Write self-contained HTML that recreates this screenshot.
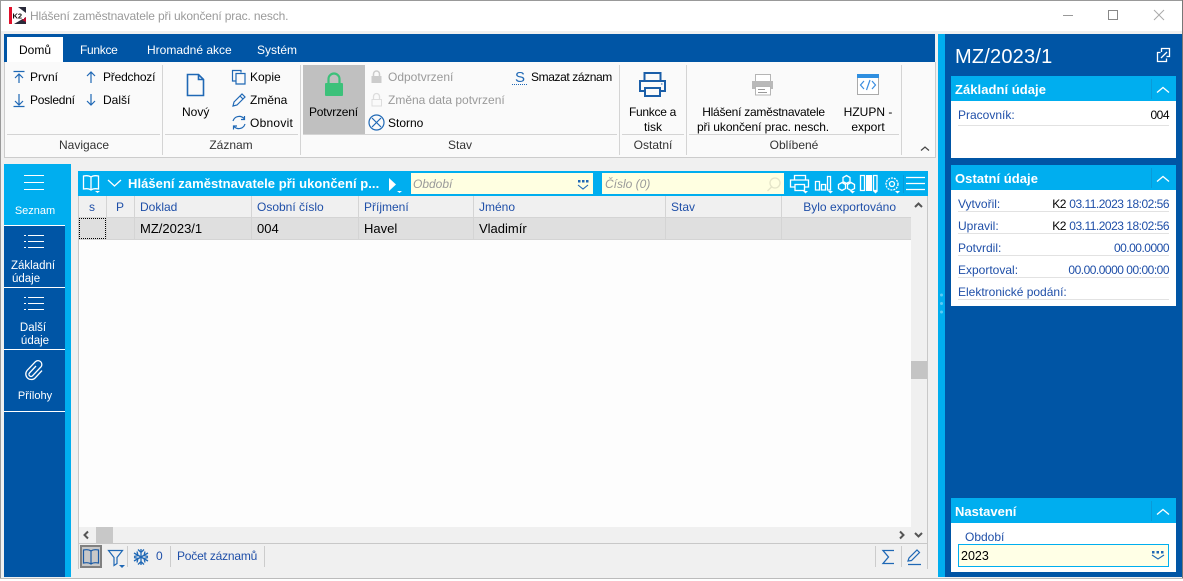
<!DOCTYPE html>
<html lang="cs"><head><meta charset="utf-8"><title>Hlášení zaměstnavatele při ukončení prac. nesch.</title>
<style>
html,body{margin:0;padding:0;width:1183px;height:581px;overflow:hidden;background:#f0f0f0}
body{position:relative;font-family:"Liberation Sans",sans-serif;font-size:12px;color:#000}
.b{position:absolute}
.t{position:absolute;white-space:nowrap;line-height:14px;height:14px}
.c{transform:translateX(-50%)}
.r{transform:translateX(-100%)}
.w{color:#fff}.g{color:#9a9a9a}.l{color:#1f4fa8}
.h{font-weight:bold;color:#fff;font-size:13px}
.d{letter-spacing:-.5px}
.m{font-size:13px}
svg{position:absolute;left:0;top:0}
</style></head><body>
<!-- frame -->
<div class="b" style="left:0;top:0;width:1183px;height:1px;background:#999"></div>
<div class="b" style="left:0;top:1px;width:1183px;height:30px;background:#fff"></div>
<div class="b" style="left:0;top:0;width:1px;height:581px;background:#999"></div>
<div class="b" style="left:1182px;top:0;width:1px;height:581px;background:#777"></div>
<div class="b" style="left:0;top:579px;width:1183px;height:2px;background:#fff"></div>
<div class="b" style="left:0;top:578px;width:1183px;height:1px;background:#bbb"></div>
<!-- ribbon -->
<div class="b" style="left:4px;top:34px;width:931px;height:28px;background:#0055a5"></div>
<div class="b" style="left:7px;top:37px;width:56px;height:25px;background:#fff"></div>
<div class="b" style="left:4px;top:62px;width:930px;height:95px;background:#fafafa;border:1px solid #ccc;border-top:0;box-sizing:content-box"></div>
<div class="b" style="left:303px;top:65px;width:62px;height:69px;background:#c0c0c0"></div>
<!-- ribbon separators -->
<div class="b" style="left:162px;top:65px;width:1px;height:90px;background:#d4d4d4"></div>
<div class="b" style="left:300px;top:65px;width:1px;height:90px;background:#d4d4d4"></div>
<div class="b" style="left:619px;top:65px;width:1px;height:90px;background:#d4d4d4"></div>
<div class="b" style="left:686px;top:65px;width:1px;height:90px;background:#d4d4d4"></div>
<div class="b" style="left:901px;top:65px;width:1px;height:90px;background:#d4d4d4"></div>
<div class="b" style="left:7px;top:134px;width:153px;height:1px;background:#d4d4d4"></div>
<div class="b" style="left:165px;top:134px;width:133px;height:1px;background:#d4d4d4"></div>
<div class="b" style="left:303px;top:134px;width:314px;height:1px;background:#d4d4d4"></div>
<div class="b" style="left:622px;top:134px;width:62px;height:1px;background:#d4d4d4"></div>
<div class="b" style="left:689px;top:134px;width:210px;height:1px;background:#d4d4d4"></div>
<!-- left nav -->
<div class="b" style="left:4px;top:164px;width:67px;height:413px;background:#00aeef"></div>
<div class="b" style="left:4px;top:226px;width:61px;height:351px;background:#0055a5"></div>
<div class="b" style="left:4px;top:225px;width:61px;height:1px;background:#fff"></div>
<div class="b" style="left:4px;top:287px;width:61px;height:1px;background:#fff"></div>
<div class="b" style="left:4px;top:349px;width:61px;height:1px;background:#fff"></div>
<div class="b" style="left:4px;top:411px;width:61px;height:1px;background:#fff"></div>
<!-- grid -->
<div class="b" style="left:78px;top:171px;width:850px;height:398px;background:#fdfdfd;border-left:1px solid #c8c8c8;border-right:1px solid #c8c8c8;border-bottom:1px solid #c8c8c8;box-sizing:border-box"></div>
<div class="b" style="left:78px;top:171px;width:850px;height:25px;background:#00aeef"></div>
<div class="b" style="left:411px;top:173px;width:182px;height:21px;background:#ffffe1"></div>
<div class="b" style="left:602px;top:173px;width:182px;height:21px;background:#ffffe1"></div>
<div class="b" style="left:79px;top:196px;width:832px;height:21px;background:#f0f0f0"></div>
<div class="b" style="left:79px;top:217px;width:832px;height:23px;background:#dfdfdf;border-top:1px solid #d4d4d4;border-bottom:1px solid #d4d4d4;box-sizing:border-box"></div>
<div class="b" style="left:79px;top:218px;width:27px;height:21px;border:1px dotted #000;box-sizing:border-box"></div>
<div class="b" style="left:106px;top:196px;width:1px;height:44px;background:#d4d4d4"></div>
<div class="b" style="left:134px;top:196px;width:1px;height:44px;background:#d4d4d4"></div>
<div class="b" style="left:251px;top:196px;width:1px;height:44px;background:#d4d4d4"></div>
<div class="b" style="left:358px;top:196px;width:1px;height:44px;background:#d4d4d4"></div>
<div class="b" style="left:473px;top:196px;width:1px;height:44px;background:#d4d4d4"></div>
<div class="b" style="left:665px;top:196px;width:1px;height:44px;background:#d4d4d4"></div>
<div class="b" style="left:781px;top:196px;width:1px;height:44px;background:#d4d4d4"></div>
<!-- scrollbars -->
<div class="b" style="left:911px;top:196px;width:16px;height:347px;background:#f0f0f0"></div>
<div class="b" style="left:911px;top:361px;width:16px;height:18px;background:#c4c4c4"></div>
<div class="b" style="left:79px;top:527px;width:848px;height:16px;background:#f0f0f0"></div>
<div class="b" style="left:96px;top:527px;width:17px;height:16px;background:#c8c8c8"></div>
<div class="b" style="left:79px;top:543px;width:848px;height:26px;background:#f0f0f0;border-top:1px solid #c8c8c8;box-sizing:border-box"></div>
<div class="b" style="left:80px;top:545px;width:22px;height:23px;background:#c8c8c8;border:2px solid #808080;box-sizing:border-box"></div>
<div class="b" style="left:127px;top:546px;width:1px;height:21px;background:#ccc"></div>
<div class="b" style="left:170px;top:546px;width:1px;height:21px;background:#ccc"></div>
<div class="b" style="left:264px;top:546px;width:1px;height:21px;background:#ccc"></div>
<div class="b" style="left:875px;top:546px;width:1px;height:21px;background:#ccc"></div>
<div class="b" style="left:901px;top:546px;width:1px;height:21px;background:#ccc"></div>
<!-- right pane -->
<div class="b" style="left:938px;top:34px;width:7px;height:543px;background:#00aeef"></div>
<div class="b" style="left:945px;top:34px;width:237px;height:543px;background:#0055a5"></div>
<div class="b" style="left:951px;top:76px;width:225px;height:82px;background:#fff"></div>
<div class="b" style="left:951px;top:76px;width:225px;height:25px;background:#00aeef"></div>
<div class="b" style="left:951px;top:165px;width:225px;height:141px;background:#fff"></div>
<div class="b" style="left:951px;top:165px;width:225px;height:25px;background:#00aeef"></div>
<div class="b" style="left:951px;top:498px;width:225px;height:74px;background:#fff"></div>
<div class="b" style="left:951px;top:498px;width:225px;height:25px;background:#00aeef"></div>
<div class="b" style="left:1151px;top:79px;width:1px;height:20px;background:#0a9ad8"></div>
<div class="b" style="left:1151px;top:168px;width:1px;height:20px;background:#0a9ad8"></div>
<div class="b" style="left:1151px;top:501px;width:1px;height:20px;background:#0a9ad8"></div>
<div class="b" style="left:958px;top:125px;width:211px;height:1px;background:#e2e2e2"></div>
<div class="b" style="left:958px;top:211px;width:211px;height:1px;background:#e2e2e2"></div>
<div class="b" style="left:958px;top:233px;width:211px;height:1px;background:#e2e2e2"></div>
<div class="b" style="left:958px;top:255px;width:211px;height:1px;background:#e2e2e2"></div>
<div class="b" style="left:958px;top:277px;width:211px;height:1px;background:#e2e2e2"></div>
<div class="b" style="left:958px;top:299px;width:211px;height:1px;background:#e2e2e2"></div>
<div class="b" style="left:958px;top:544px;width:211px;height:23px;background:#ffffe6;border:1px solid #00aeef;box-sizing:border-box"></div>

<!-- icons -->
<svg width="1183" height="581" viewBox="0 0 1183 581" fill="none">
<!-- logo -->
<rect x="9" y="7" width="17" height="17" fill="#fff"/><rect x="9" y="7" width="3" height="17" fill="#e0102a"/>
<path d="M18 7h8v6zM14 24l12-7v7z" fill="#2a2a3a"/><path d="M22 20l4-3v5z" fill="#c01030"/>
<rect x="12" y="12" width="12" height="7" fill="#fff"/>
<text x="12.5" y="18.5" font-family="Liberation Sans" font-size="7.5" font-weight="bold" fill="#111">K2</text>
<!-- window buttons -->
<path d="M1063 15.5h10" stroke="#999"/><rect x="1108.5" y="10.5" width="9" height="9" stroke="#888"/>
<path d="M1154 10l10 10M1164 10l-10 10" stroke="#aaa"/>
<g stroke="#1f68b5" stroke-width="1.2">
<!-- navigation arrows -->
<path d="M13.5 71.5h11M19 74v9M15 78l4-4 4 4"/>
<path d="M91 83V72M87 76l4-4 4 4"/>
<path d="M19 94v11M15 101l4 4 4-4M13.5 106.500h11"/>
<path d="M91 94v11M87 101l4 4 4-4"/>
<!-- new doc -->
<path d="M187.500 74.500h11l5 5v16h-16zM198.500 74.500v5h5" stroke-width="1.600"/>
<!-- copy -->
<path d="M241 72.500v-2h-8.500v10.500h3.500M236 73.500h9v10.500h-9z"/>
<!-- pencil -->
<path d="M233 106l1-4 8-8 3 3-8 8zM240 96l3 3"/>
<!-- refresh -->
<path d="M233 121a6.500 6.500 0 0 1 11-2.500M244.500 116v3.500h-3.500M245 124a6.500 6.500 0 0 1-11 2.500M233.500 129.500v-3.500h3.500"/>
<!-- storno -->
<circle cx="376.500" cy="122.500" r="7.500"/><path d="M372 118l9 9M381 118l-9 9"/>
<!-- sigma / pencil status -->
<path d="M894 550.500h-11l5.500 6.500-5.500 6.500h11" stroke-width="1.300"/>
<path d="M908 561l1-3 8-8 2.500 2.500-8 8zM908 564.500h13"/>
<!-- snowflake -->
<path d="M141 549v16M134 553l14 8M148 553l-14 8M138 549.500l3 3 3-3M138 564.500l3-3 3 3M134 556.500l4-1-1-4M148 556.500l-4-1 1-4M134 557.500l4 1-1 4M148 557.500l-4 1 1 4" stroke-width="1.300"/>
<!-- funnel -->
<path d="M108.500 550.500h14l-5.500 7v6l-3 2v-8z"/>
<!-- book status -->
<path d="M91 551c-2-1.500-5-1.500-7.500-1v13c2.500-.5 5.500-.5 7.500 1 2-1.500 5-1.500 7.500-1v-13c-2.500-.5-5.500-.5-7.500 1zM91 551v13" stroke="#1a5aa5"/>
</g>
<path d="M119 565h6l-3 3z" fill="#1f68b5"/>
<!-- locks -->
<rect x="325" y="83" width="18" height="13" rx="1" fill="#3cc17a"/><path d="M328.500 83v-4a5.500 5.500 0 0 1 11 0v4" stroke="#3cc17a" stroke-width="2.200"/>
<rect x="371.500" y="76" width="10" height="7" fill="#ccc"/><path d="M373.500 76v-2a3 3 0 0 1 6 0v2" stroke="#ccc" stroke-width="1.500"/>
<rect x="372" y="99.500" width="9.500" height="6.500" stroke="#ddd" fill="#fafafa"/><path d="M373.500 99v-2.500a3 3 0 0 1 6 0v2.500" stroke="#ddd" stroke-width="1.300"/>
<!-- S icon -->
<text x="515" y="82" font-family="Liberation Sans" font-size="15" fill="#1f68b5">S</text>
<path d="M512 84.500h15" stroke="#1f68b5" stroke-dasharray="1 1"/>
<!-- printer blue -->
<g stroke="#1a5ea8" stroke-width="2">
<path d="M644.500 81v-8h16v8"/><path d="M645 91h-5v-10h25v10h-5"/>
<rect x="645" y="88" width="15" height="8" fill="#fafafa"/></g>
<path d="M661 84h1.500" stroke="#1a5ea8"/>
<!-- printer grey -->
<rect x="755.500" y="74.500" width="15" height="8" stroke="#b5b5b5" fill="#fff"/>
<rect x="752" y="81" width="21" height="8" fill="#b9b9b9"/>
<rect x="755.500" y="86.500" width="15" height="8.500" fill="#fff" stroke="#b5b5b5"/><path d="M758 89.500h7M758 92.500h9" stroke="#999"/>
<!-- html icon -->
<rect x="857.500" y="74.500" width="21" height="20" fill="#fff" stroke="#aaa"/><rect x="857" y="74" width="22" height="4" fill="#2f8fe0"/>
<path d="M864 81l-3.500 4 3.500 4M872 81l3.500 4-3.500 4M870 80l-3.500 10" stroke="#3a8de0" stroke-width="1.200"/>
<path d="M921 150.500l4-3.500 4 3.500" stroke="#444" stroke-width="1.200"/>
<!-- nav icons -->
<g stroke="#fff" stroke-width="1.100">
<path d="M24 175.500h20M24 182.500h20M24 189.500h20"/>
<path d="M28 235.500h16M28 241.500h16M28 247.500h16M24 235.500h2M24 241.500h2M24 247.500h2"/>
<path d="M28 297.500h16M28 303.500h16M28 309.500h16M24 297.500h2M24 303.500h2M24 309.500h2"/>
<path d="M36 366l-6.500 7a2 2 0 0 0 3 2.800l8.500-9a3.800 3.800 0 0 0-5.500-5.200l-8.500 9a5.500 5.500 0 0 0 8 7.500l7-7.500" stroke-width="1.300"/>
</g>
<!-- grid toolbar -->
<g stroke="#fff" stroke-width="1.300">
<path d="M91 177c-2-1.500-5-1.500-7.500-1v13c2.500-.5 5.500-.5 7.500 1 2-1.500 5-1.500 7.500-1v-13c-2.500-.5-5.500-.5-7.500 1zM91 177v13"/>
<path d="M108 180l6.500 6 6.500-6"/>
<path d="M794.500 180v-4.500h11v4.500M795 187h-4.500v-7h18v7h-4"/><rect x="795" y="184.500" width="9.500" height="6"/>
<path d="M815.500 181.500h4v8.500h-4zM821.500 184.500h4v5.500h-4zM827.500 176.500h3v13.500h-3z"/>
<path d="M846.500 175.500l3.500 2v4l-3.500 2-3.500-2v-4zM842 182.500l3.500 2v4l-3.500 2-3.500-2v-4zM851 182.500l3.500 2v4l-3.500 2-3.500-2v-4z"/>
<path d="M860.500 175.500h4v15h-4zM873.500 175.500h3.500v15h-3.500z"/><rect x="866" y="175" width="6" height="16" fill="#fff" stroke="none"/>
<circle cx="892" cy="184" r="6" stroke-dasharray="2 1"/><circle cx="892" cy="184" r="2.500"/>
<path d="M906 177.500h19M906 183.500h19M906 189.500h19"/>
<path d="M1160.500 52.500h-3v9h9v-3M1161.500 52v-3.500h8v8h-3M1161 58l6-6"/>
</g>
<path d="M903.500 175v18" stroke="#0a9ad8"/>
<g stroke="#fff" stroke-width="1.300"><path d="M1157 92.500l6-5 6 5M1157 181.500l6-5 6 5M1157 514.500l6-5 6 5"/></g>
<path d="M389 178l7 6.500-7 6.500zM397 191h5l-2.500 2zM95 191h5l-2.500 2z" fill="#fff"/>
<path d="M828 191h5l-2.500 2.500zM803 191h5l-2.500 2.500zM850 191h5l-2.500 2.500zM873 191h5l-2.500 2.500zM895 191h5l-2.500 2.500z" fill="#fff"/>
<!-- search / combo -->
<path d="M578 185l5 4 5-4" stroke="#1f68b5" stroke-width="1.100"/>
<path d="M578 180h2.500v2.500h-2.500zM582 180h2.500v2.500h-2.500zM586 180h2.500v2.500h-2.500z" fill="#1f68b5"/>
<path d="M1152 555l6 4 6-4" stroke="#1f68b5" stroke-width="1.100"/>
<path d="M1152 551h2.500v2.500h-2.500zM1156.500 551h2.500v2.500h-2.500zM1161 551h2.500v2.500h-2.500z" fill="#1f68b5"/>
<circle cx="775" cy="183" r="5" stroke="#e4e4c8" stroke-width="1.300"/><path d="M771.500 187l-4 4" stroke="#e4e4c8" stroke-width="1.300"/>
<!-- scroll arrows -->
<path d="M915 207l3.500-3.500 3.500 3.500M88 531.500l-3.500 3.500 3.500 3.500M900 531.500l3.500 3.500-3.500 3.500M915 533l3.500 3.500 3.500-3.500" stroke="#555" stroke-width="2"/>
<!-- splitter dots -->
<circle cx="941.500" cy="295" r="1.500" fill="#5ccaf5"/><circle cx="941.500" cy="303.500" r="1.500" fill="#5ccaf5"/><circle cx="941.500" cy="312" r="1.500" fill="#5ccaf5"/>
</svg>

<!-- text -->
<div class="t g" style="left:30px;top:9px;letter-spacing:-.15px">Hlášení zaměstnavatele při ukončení prac. nesch.</div>
<div class="t" style="left:19px;top:43px">Domů</div>
<div class="t w" style="left:80px;top:43px;letter-spacing:-.3px">Funkce</div>
<div class="t w" style="left:147px;top:43px">Hromadné akce</div>
<div class="t w" style="left:257px;top:43px">Systém</div>
<div class="t" style="left:30px;top:70px">První</div>
<div class="t" style="left:103px;top:70px;letter-spacing:-.2px">Předchozí</div>
<div class="t" style="left:30px;top:93px;letter-spacing:-.25px">Poslední</div>
<div class="t" style="left:103px;top:93px">Další</div>
<div class="t" style="left:182px;top:105px">Nový</div>
<div class="t" style="left:250px;top:70px">Kopie</div>
<div class="t" style="left:250px;top:93px">Změna</div>
<div class="t" style="left:250px;top:116px;letter-spacing:.25px">Obnovit</div>
<div class="t" style="left:309px;top:105px;letter-spacing:-.2px">Potvrzení</div>
<div class="t g" style="left:388px;top:70px">Odpotvrzení</div>
<div class="t g" style="left:388px;top:93px">Změna data potvrzení</div>
<div class="t" style="left:388px;top:116px">Storno</div>
<div class="t" style="left:531px;top:70px;letter-spacing:-.4px">Smazat záznam</div>
<div class="t c" style="left:652.500px;top:105px;letter-spacing:-.3px">Funkce a</div>
<div class="t c" style="left:653px;top:120px">tisk</div>
<div class="t c" style="left:763.500px;top:105px;letter-spacing:-.25px">Hlášení zaměstnavatele</div>
<div class="t c" style="left:763px;top:120px;letter-spacing:-.08px">při ukončení prac. nesch.</div>
<div class="t c" style="left:868px;top:105px">HZUPN -</div>
<div class="t c" style="left:868px;top:120px">export</div>
<div class="t c" style="left:84px;top:138px;color:#333">Navigace</div>
<div class="t c" style="left:231px;top:138px;color:#333">Záznam</div>
<div class="t c" style="left:460px;top:138px;color:#333">Stav</div>
<div class="t c" style="left:653px;top:138px;color:#333">Ostatní</div>
<div class="t c" style="left:794px;top:138px;color:#333">Oblíbené</div>

<div class="t c w" style="left:35px;top:204px;font-size:11px">Seznam</div>
<div class="t c w" style="left:33px;top:259px;font-size:11.500px">Základní</div>
<div class="t w" style="left:12px;top:272px;font-size:11.500px">údaje</div>
<div class="t c w" style="left:33px;top:321px;font-size:11.500px">Další</div>
<div class="t c w" style="left:35px;top:334px;font-size:11.500px">údaje</div>
<div class="t c w" style="left:35px;top:389px;font-size:11px">Přílohy</div>

<div class="t" style="left:128px;top:177px;font-weight:bold;color:#fff;font-size:13px;letter-spacing:.05px">Hlášení zaměstnavatele při ukončení p...</div>
<div class="t g" style="left:413px;top:177px;font-style:italic">Období</div>
<div class="t g" style="left:605px;top:177px;font-style:italic">Číslo (0)</div>
<div class="t c l" style="left:92px;top:200px">s</div>
<div class="t c l" style="left:120px;top:200px">P</div>
<div class="t l" style="left:140px;top:200px">Doklad</div>
<div class="t l" style="left:257px;top:200px">Osobní číslo</div>
<div class="t l" style="left:364px;top:200px">Příjmení</div>
<div class="t l" style="left:479px;top:200px">Jméno</div>
<div class="t l" style="left:671px;top:200px">Stav</div>
<div class="t r l" style="left:896px;top:200px">Bylo exportováno</div>
<div class="t m" style="left:140px;top:222px">MZ/2023/1</div>
<div class="t m" style="left:257px;top:222px">004</div>
<div class="t m" style="left:364px;top:222px">Havel</div>
<div class="t m" style="left:479px;top:222px">Vladimír</div>
<div class="t l" style="left:156px;top:549px">0</div>
<div class="t l" style="left:177px;top:549px;letter-spacing:-.2px">Počet záznamů</div>

<div class="t w" style="left:955px;top:46px;font-size:20px;line-height:22px;height:22px;letter-spacing:.2px">MZ/2023/1</div>
<div class="t h" style="left:955px;top:83px;letter-spacing:.05px">Základní údaje</div>
<div class="t l" style="left:958px;top:108px">Pracovník:</div>
<div class="t r d" style="left:1169px;top:108px">004</div>
<div class="t h" style="left:955px;top:172px;letter-spacing:.05px">Ostatní údaje</div>
<div class="t l" style="left:958px;top:197px">Vytvořil:</div>
<div class="t r" style="left:1169px;top:197px"><span class="d">K2</span> <span class="l d">03.11.2023 18:02:56</span></div>
<div class="t l" style="left:958px;top:219px">Upravil:</div>
<div class="t r" style="left:1169px;top:219px"><span class="d">K2</span> <span class="l d">03.11.2023 18:02:56</span></div>
<div class="t l" style="left:958px;top:241px">Potvrdil:</div>
<div class="t r l d" style="left:1169px;top:241px">00.00.0000</div>
<div class="t l" style="left:958px;top:263px">Exportoval:</div>
<div class="t r l d" style="left:1169px;top:263px">00.00.0000 00:00:00</div>
<div class="t l" style="left:958px;top:285px">Elektronické podání:</div>
<div class="t h" style="left:955px;top:505px">Nastavení</div>
<div class="t l" style="left:965px;top:530px">Období</div>
<div class="t" style="left:961px;top:549px;font-size:12.500px">2023</div>
</body></html>
